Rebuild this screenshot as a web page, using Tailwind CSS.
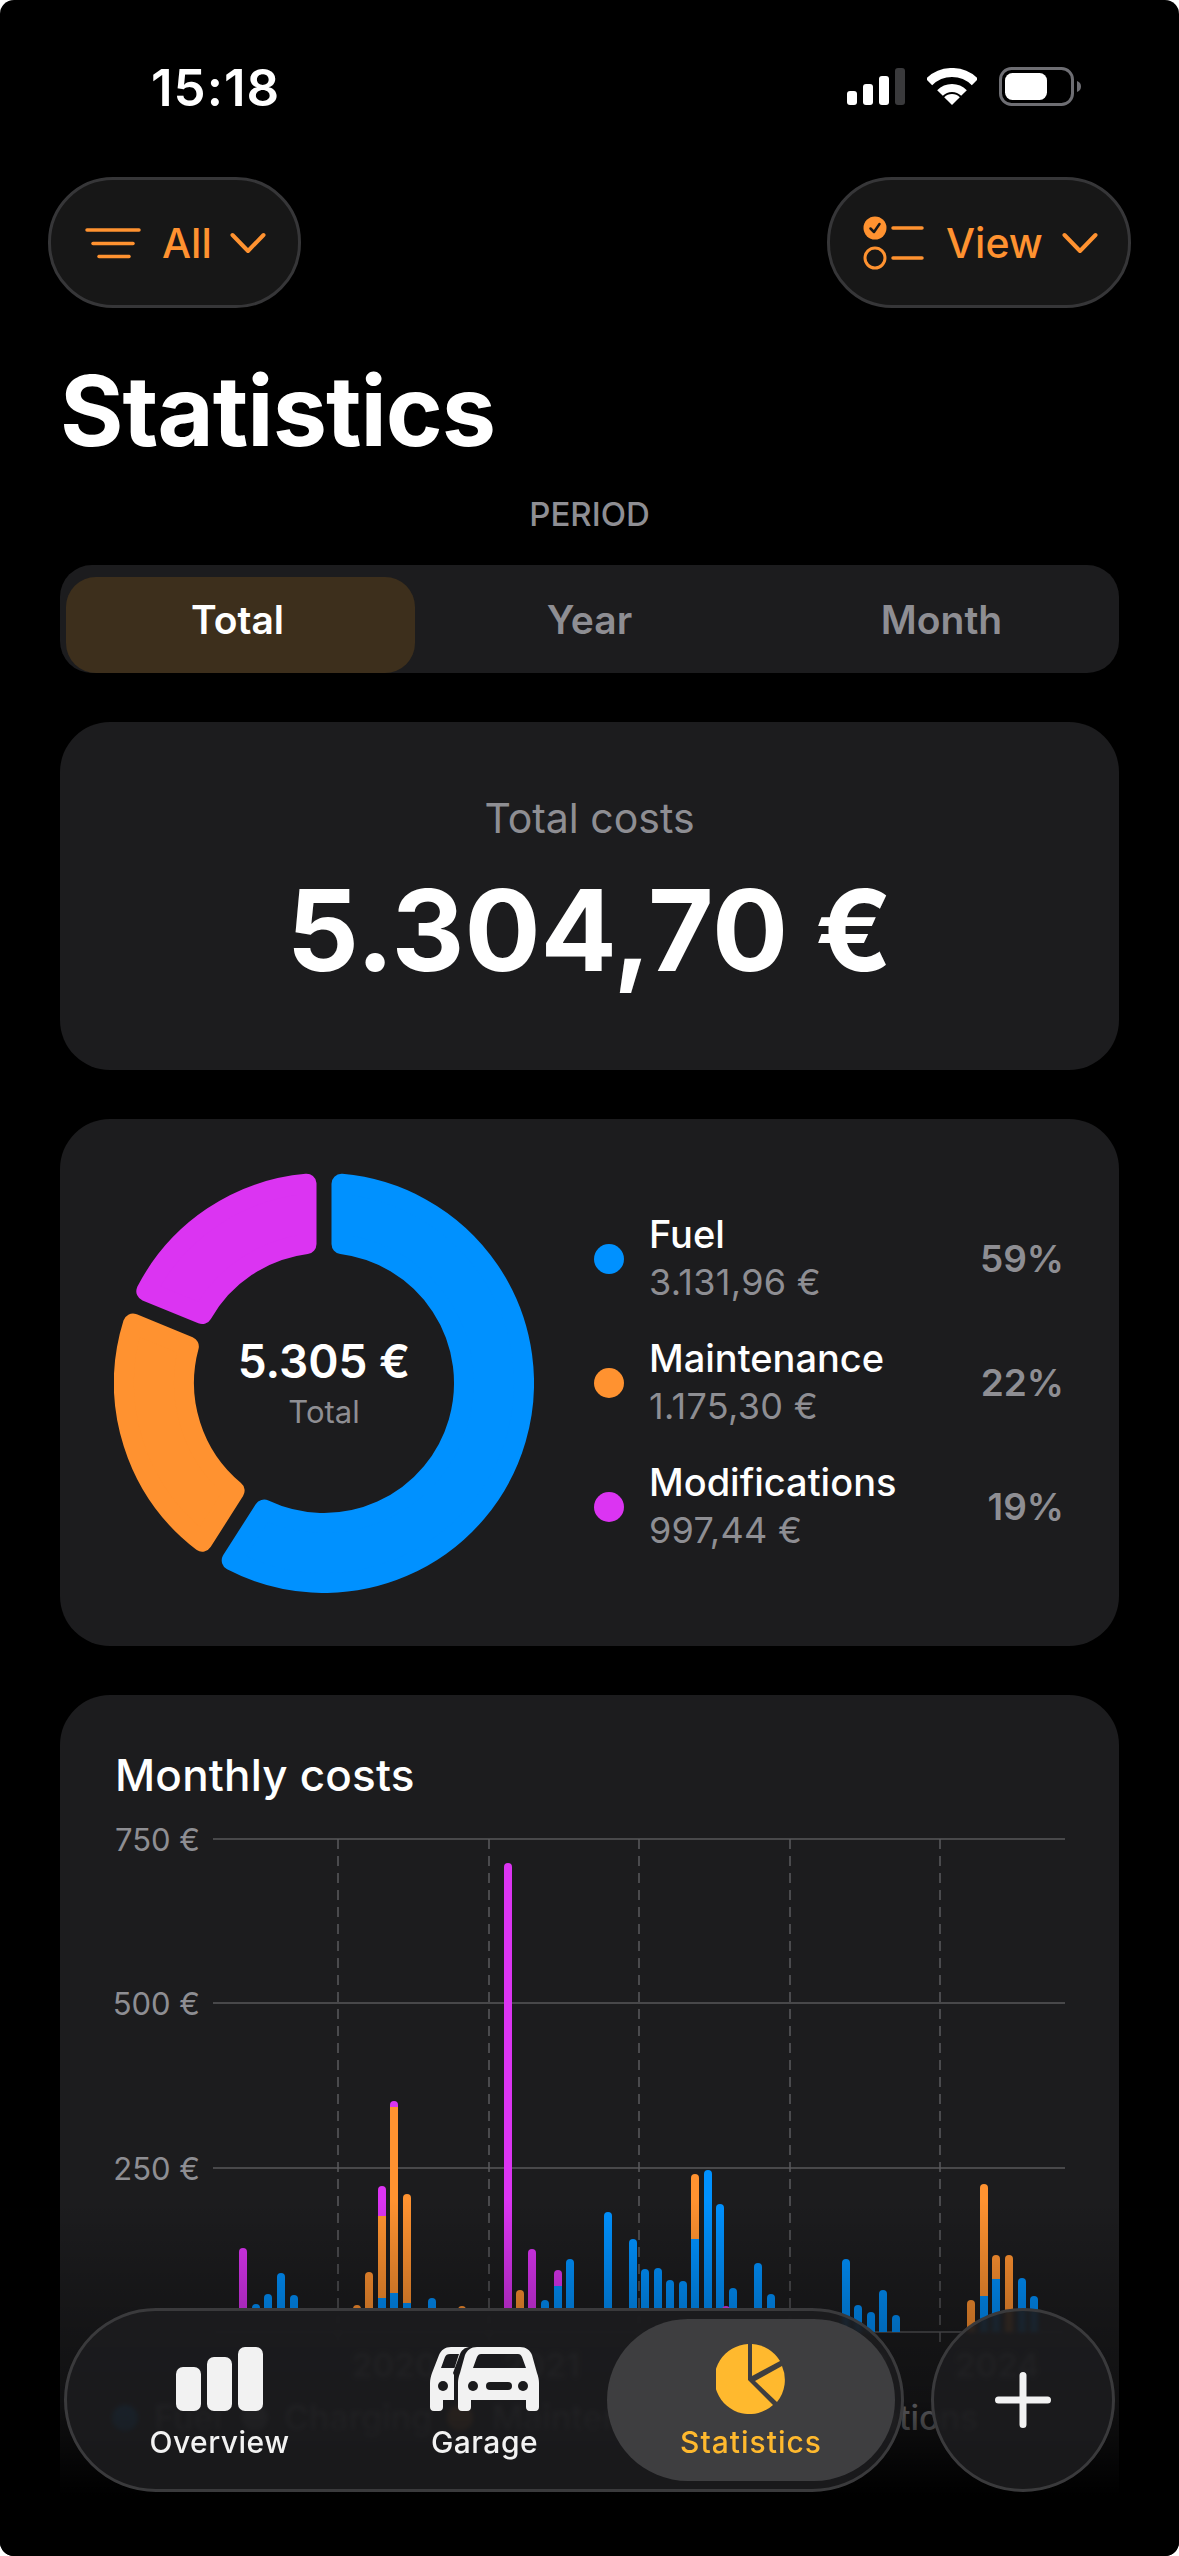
<!DOCTYPE html>
<html lang="en">
<head>
    <meta charset="UTF-8">
    <title>Statistics</title>
    <script src="https://cdn.jsdelivr.net/npm/@tailwindcss/browser@4"></script>
</head>
<body class="bg-white">
<div class="relative w-[1179px] h-[2556px] overflow-hidden rounded-[14px] bg-black text-white font-['Inter',sans-serif]">

    <!-- Status bar -->
    <div class="flex justify-between items-start h-[177px] pt-[62px] pl-[151px] pr-[98px]">
        <span class="text-[51px] leading-[52px] font-semibold tracking-[1px]">15:18</span>
        <div class="flex items-start gap-[22px] pt-[6px]">
            <svg width="58" height="37" viewBox="0 0 58 37">
                <rect x="0" y="23" width="10" height="14" rx="3" fill="#fff"/>
                <rect x="16" y="16" width="10" height="21" rx="3" fill="#fff"/>
                <rect x="32" y="8" width="10" height="29" rx="3" fill="#fff"/>
                <rect x="48" y="0" width="10" height="37" rx="3" fill="#3a3a3c"/>
            </svg>
            <svg width="50" height="37" viewBox="0 0 50 37" fill="none" stroke="#fff">
                <path d="M2 14 A32.5 32.5 0 0 1 48 14" stroke-width="9"/>
                <path d="M13 25 A17 17 0 0 1 37 25" stroke-width="8"/>
                <path d="M25 37 L17.2 29.2 A11 11 0 0 1 32.8 29.2 Z" fill="#fff" stroke="none"/>
            </svg>
            <svg width="82" height="39" viewBox="0 0 82 39" class="-mt-px">
                <rect x="1.5" y="1.5" width="72" height="36" rx="11" fill="none" stroke="#6e6e73" stroke-width="3"/>
                <rect x="6" y="6" width="42" height="27" rx="7.5" fill="#fff"/>
                <path d="M78 14 C81 15 82 17 82 19.500 C82 22 81 24 78 25 Z" fill="#6e6e73"/>
            </svg>
        </div>
    </div>

    <!-- Top buttons -->
    <div class="flex justify-between pl-[48px] pr-[48px]">
        <button class="flex items-center h-[131px] w-[253px] pl-[34px] rounded-[65px] border-[3px] border-[#363638] bg-[#171717] text-[#ff9230]">
            <svg width="56" height="32" viewBox="0 0 56 32" fill="none" stroke="#ff9230" stroke-width="3.500" stroke-linecap="round">
                <path d="M2 3 H54"/><path d="M8 16.500 H48"/><path d="M14 29.500 H44"/>
            </svg>
            <span class="ml-[21px] pt-[2px] text-[41px] leading-none font-medium">All</span>
            <svg class="ml-[18px]" width="36" height="22" viewBox="0 0 36 22" fill="none" stroke="#ff9230" stroke-width="4" stroke-linecap="round" stroke-linejoin="round">
                <path d="M2.500 3 L18 19 L33.500 3"/>
            </svg>
        </button>
        <button class="flex items-center h-[131px] w-[304px] pl-[33px] rounded-[65px] border-[3px] border-[#363638] bg-[#171717] text-[#ff9230]">
            <svg width="62" height="54" viewBox="0 0 62 54" fill="none">
                <circle cx="12" cy="12" r="11.500" fill="#ff9230"/>
                <path d="M7.500 12.500 L11 16 L16.500 8" stroke="#171717" stroke-width="2.500" stroke-linecap="round" stroke-linejoin="round"/>
                <circle cx="12" cy="42" r="10" stroke="#ff9230" stroke-width="3"/>
                <path d="M30 12 H59 M30 42 H59" stroke="#ff9230" stroke-width="3.500" stroke-linecap="round"/>
            </svg>
            <span class="ml-[21px] pt-[2px] text-[41px] leading-none font-medium">View</span>
            <svg class="ml-[19px]" width="36" height="22" viewBox="0 0 36 22" fill="none" stroke="#ff9230" stroke-width="4" stroke-linecap="round" stroke-linejoin="round">
                <path d="M2.500 3 L18 19 L33.500 3"/>
            </svg>
        </button>
    </div>

    <main class="px-[60px]">
        <h1 class="mt-[55px] text-[97px] leading-[96px] font-bold tracking-[-1px]">Statistics</h1>
        <p class="mt-[39px] text-center text-[33px] leading-[32px] font-medium text-[#8e8e93]">PERIOD</p>

        <!-- Period selector -->
        <div class="mt-[35px] h-[108px] pt-[12px] pl-[6px] pr-[6px] rounded-[32px] bg-[#1c1c1e] grid grid-cols-3 text-[39px] font-semibold">
            <div class="flex items-center justify-center h-[96px] pb-[9px] pr-[6px] rounded-[30px] bg-[#3d2f1c] text-white">Total</div>
            <div class="flex items-center justify-center h-[96px] pb-[9px] text-[#8e8e93]">Year</div>
            <div class="flex items-center justify-center h-[96px] pb-[9px] pl-[6px] text-[#8e8e93]">Month</div>
        </div>

        <!-- Total costs -->
        <section class="mt-[49px] h-[348px] pt-[72px] rounded-[50px] bg-[#1c1c1e] text-center">
            <p class="text-[41px] leading-[48px] text-[#8e8e93]">Total costs</p>
            <p class="mt-[32px] text-[113px] leading-[113px] font-bold">5.304,70 €</p>
        </section>

        <!-- Breakdown -->
        <section class="mt-[49px] h-[527px] pl-[54px] pr-[55px] rounded-[50px] bg-[#1c1c1e] flex items-center">
            <div class="relative w-[420px] h-[420px] shrink-0">
                <svg id="donut" width="420" height="420" viewBox="-210 -210 420 420"></svg>
                <div class="absolute inset-0 flex flex-col items-center justify-center">
                    <span class="text-[46px] leading-[50px] font-semibold">5.305 €</span>
                    <span class="mt-[8px] text-[31px] leading-[36px] text-[#8e8e93]">Total</span>
                </div>
            </div>
            <div class="ml-[60px] flex-1 flex flex-col gap-[29px]">
                <div class="flex items-center">
                    <span class="w-[30px] h-[30px] rounded-full bg-[#0091ff]"></span>
                    <div class="ml-[25px] flex-1">
                        <p class="text-[38px] leading-[47px] font-medium">Fuel</p>
                        <p class="pt-[1px] text-[36px] leading-[47px] tracking-[0.3px] text-[#8e8e93]">3.131,96 €</p>
                    </div>
                    <span class="text-[37px] font-semibold text-[#8e8e93]">59%</span>
                </div>
                <div class="flex items-center">
                    <span class="w-[30px] h-[30px] rounded-full bg-[#ff9230]"></span>
                    <div class="ml-[25px] flex-1">
                        <p class="text-[38px] leading-[47px] font-medium">Maintenance</p>
                        <p class="pt-[1px] text-[36px] leading-[47px] tracking-[0.3px] text-[#8e8e93]">1.175,30 €</p>
                    </div>
                    <span class="text-[37px] font-semibold text-[#8e8e93]">22%</span>
                </div>
                <div class="flex items-center">
                    <span class="w-[30px] h-[30px] rounded-full bg-[#db34f2]"></span>
                    <div class="ml-[25px] flex-1">
                        <p class="text-[38px] leading-[47px] font-medium">Modifications</p>
                        <p class="pt-[1px] text-[36px] leading-[47px] tracking-[0.3px] text-[#8e8e93]">997,44 €</p>
                    </div>
                    <span class="text-[37px] font-semibold text-[#8e8e93]">19%</span>
                </div>
            </div>
        </section>

        <!-- Monthly costs -->
        <section class="mt-[49px] h-[900px] pt-[58px] rounded-[50px] bg-[#1c1c1e]">
            <h2 class="pl-[55px] text-[44px] leading-[44px] font-medium tracking-[0.2px]">Monthly costs</h2>
            <svg id="chart" class="block mt-[3px]" width="1059" height="756" viewBox="60 1800 1059 756"></svg>
        </section>
    </main>

    <!-- Fade under the tab bar -->
    <div class="absolute left-0 right-0 top-[2200px] bottom-0 bg-[linear-gradient(to_bottom,rgba(0,0,0,0)_0px,rgba(0,0,0,0.22)_100px,rgba(0,0,0,0.4)_200px,rgba(0,0,0,1)_295px)]"></div>

    <!-- Tab bar -->
    <nav class="absolute left-[64px] top-[2308px] w-[840px] h-[184px] pl-[20px] flex items-center rounded-[92px] border-[3px] border-[#3a3a3c] bg-[#1c1c1e]/90 backdrop-blur-[2px]">
        <div class="w-[265px] h-[162px] pt-[28px] flex flex-col items-center text-[#f2f2f2]">
            <svg width="87" height="64" viewBox="0 0 87 64" fill="#f2f2f2">
                <rect x="0" y="20" width="25" height="44" rx="7"/>
                <rect x="31" y="10" width="25" height="54" rx="7"/>
                <rect x="62" y="0" width="25" height="64" rx="7"/>
            </svg>
            <span class="mt-[16px] text-[30px] leading-[30px] font-medium tracking-[0.5px]">Overview</span>
        </div>
        <div class="w-[265px] h-[162px] pt-[28px] flex flex-col items-center text-[#f2f2f2]">
            <svg width="109" height="64" viewBox="0 0 109 64">
                <path fill-rule="evenodd" fill="#f2f2f2" d="M39 0 C34 1 32 3 30 7 L23 26 L24 28 C24 31 24 33 24 36 V53 H13 V60 C13 62 12 64 9 64 H4 C1 64 0 62 0 60 V36 C0 32 1 29 2 26 L9 8 C11 3 15 0 21 0 Z M20 7 C17 7 16 8 15 10 L11 21 H24.500 L29 7 Z"/>
                <circle cx="13" cy="39" r="5" fill="#1a1a1c"/>
                <path fill-rule="evenodd" fill="#f2f2f2" d="M47 0 H90 C96 0 100 3 102 8 L107 26 C108.500 30 109 33 109 36 V60 C109 62 108 64 105 64 H100 C97 64 96 62 96 60 V53 H41 V60 C41 62 40 64 37 64 H32 C29 64 28 62 28 60 V36 C28 33 28.500 30 30 26 L35 8 C37 3 41 0 47 0 Z M51 7 C49 7 48 8 47 10 L43 21 H96 L92 10 C91 8 90 7 88 7 Z"/>
                <circle cx="43" cy="39" r="5" fill="#1a1a1c"/>
                <circle cx="93" cy="39" r="5" fill="#1a1a1c"/>
                <rect x="56" y="35" width="26" height="8" rx="4" fill="#1a1a1c"/>
            </svg>
            <span class="mt-[16px] text-[30px] leading-[30px] font-medium tracking-[0.5px]">Garage</span>
        </div>
        <div class="-ml-[10px] w-[288px] h-[162px] pt-[28px] flex flex-col items-center rounded-[81px] bg-[#404042]/95 text-[#ffb92e]">
            <svg class="-my-[3px]" width="70" height="70" viewBox="0 0 70 70" fill="#ffb92e">
                <path d="M32 36 L57 61 A35 35 0 1 1 32 0.100 Z"/>
                <path d="M36 32 L36 0 A35 35 0 0 1 64 17 Z"/>
                <path d="M39 37 L66 22 A35 35 0 0 1 61 58 Z"/>
            </svg>
            <span class="mt-[16px] text-[30px] leading-[30px] font-medium tracking-[1px]">Statistics</span>
        </div>
    </nav>

    <button class="absolute left-[931px] top-[2308px] w-[184px] h-[184px] flex items-center justify-center rounded-full border-[3px] border-[#3a3a3c] bg-[#1c1c1e]/90 backdrop-blur-[2px]">
        <svg width="56" height="56" viewBox="0 0 56 56" stroke="#f2f2f2" stroke-width="7" stroke-linecap="round">
            <path d="M28 3.500 V52.500 M3.500 28 H52.500"/>
        </svg>
    </button>
</div>

<script>
    const BLUE = '#0091ff', ORANGE = '#ff9230', PURPLE = '#db34f2';

    // --- Donut ---
    function ringPath(a0, a1) {
        const ro = 200, ri = 140, side = 17.5;
        const pt = (r, a) => [(r * Math.sin(a)).toFixed(2), (-r * Math.cos(a)).toFixed(2)].join(' ');
        const do_ = Math.asin(side / ro), di = Math.asin(side / ri);
        const large = (a1 - a0 - 2 * do_) > Math.PI ? 1 : 0;
        return `M${pt(ro, a0 + do_)} A${ro} ${ro} 0 ${large} 1 ${pt(ro, a1 - do_)} L${pt(ri, a1 - di)} A${ri} ${ri} 0 ${large} 0 ${pt(ri, a0 + di)} Z`;
    }
    const segs = [[0, 212.5, BLUE], [212.5, 292.3, ORANGE], [292.3, 360, PURPLE]];
    document.getElementById('donut').innerHTML = segs.map(([a, b, c]) =>
        `<path d="${ringPath(a * Math.PI / 180, b * Math.PI / 180)}" fill="${c}" stroke="${c}" stroke-width="20" stroke-linejoin="round"/>`
    ).join('');

    // --- Chart: coordinates are page pixels, each bar is [x, [colour, top], ...] ---
    const bars = [
        [243, [PURPLE, 2248]], [256, [BLUE, 2304]], [268, [BLUE, 2294]], [281, [BLUE, 2273]], [294, [BLUE, 2295]],
        [357, [ORANGE, 2305]], [369, [ORANGE, 2272]], [382, [PURPLE, 2186], [ORANGE, 2216], [BLUE, 2298]],
        [394, [PURPLE, 2101], [ORANGE, 2107], [BLUE, 2293]], [407, [ORANGE, 2194], [BLUE, 2303]], [432, [BLUE, 2298]],
        [462, [ORANGE, 2306]], [508, [PURPLE, 1863]], [520, [ORANGE, 2290]], [532, [PURPLE, 2249]], [545, [BLUE, 2300]],
        [558, [PURPLE, 2270], [BLUE, 2286]], [570, [BLUE, 2259]], [608, [BLUE, 2212]], [633, [BLUE, 2239]], [645, [BLUE, 2269]],
        [658, [BLUE, 2268]], [670, [BLUE, 2280]], [683, [BLUE, 2281]], [695, [ORANGE, 2174], [BLUE, 2239]], [708, [BLUE, 2170]],
        [720, [BLUE, 2204]], [733, [BLUE, 2288]], [726, [PURPLE, 2306]], [758, [BLUE, 2263]], [771, [BLUE, 2294]],
        [846, [BLUE, 2259]], [858, [BLUE, 2305]], [871, [BLUE, 2312]], [883, [BLUE, 2290]], [896, [BLUE, 2315]],
        [971, [ORANGE, 2300]], [984, [ORANGE, 2184], [BLUE, 2296]], [996, [ORANGE, 2255], [BLUE, 2279]], [1009, [ORANGE, 2255]],
        [1022, [BLUE, 2278]], [1034, [BLUE, 2296]]
    ];

    function barSvg([x, ...parts]) {
        const w = 8, left = x - w / 2, bottom = x < 840 ? 2308 : 2332;
        return parts.map(([color, top], i) => {
            const end = i + 1 < parts.length ? parts[i + 1][1] : bottom;
            if (i === 0) {
                return `<path d="M${left} ${end} V${top + 4} A4 4 0 0 1 ${left + w} ${top + 4} V${end} Z" fill="${color}"/>`;
            }
            return `<rect x="${left}" y="${top}" width="${w}" height="${end - top}" fill="${color}"/>`;
        }).join('');
    }

    let chart = '';
    [1839, 2003, 2168, 2332].forEach(y => {
        chart += `<line x1="213" x2="1065" y1="${y}" y2="${y}" stroke="#48484a" stroke-width="2"/>`;
    });
    [338, 489, 639, 790, 940].forEach(x => {
        chart += `<line x1="${x}" x2="${x}" y1="1839" y2="2345" stroke="#5a5a5e" stroke-width="1.500" stroke-dasharray="10 7"/>`;
    });
    [['750 €', 1851], ['500 €', 2015], ['250 €', 2180]].forEach(([t, y]) => {
        chart += `<text x="200" y="${y}" text-anchor="end" font-size="31" fill="#8e8e93">${t}</text>`;
    });
    ['2020', '2021', '2022', '2023', '2024'].forEach((t, i) => {
        chart += `<text x="${[352, 503, 653, 804, 955][i]}" y="2377" font-size="33" font-weight="600" fill="#6e6e73">${t}</text>`;
    });
    [[125, 154, 'Fuel', BLUE], [255, 284, 'Charging', '#8e8e93'], [460, 492, 'Maintenance', ORANGE], [725, 757, 'Modifications', PURPLE]].forEach(([cx, tx, t, c]) => {
        chart += `<circle cx="${cx}" cy="2418" r="13" fill="${c}"/><text x="${tx}" y="2430" font-size="34" font-weight="500" fill="#8e8e93">${t}</text>`;
    });
    chart += bars.map(barSvg).join('');
    document.getElementById('chart').innerHTML = chart;
</script>
</body>
</html>
